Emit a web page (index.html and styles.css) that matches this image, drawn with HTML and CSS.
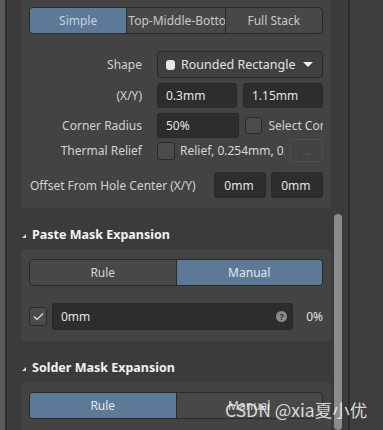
FILE: index.html
```html
<!DOCTYPE html>
<html lang="en">
<head>
  <meta charset="UTF-8">
  <meta name="viewport" content="width=device-width, initial-scale=1.0">
  <title>Pad Properties</title>
  <link rel="stylesheet" href="styles.css">
</head>
<body>
  <div class="frame">
    <div class="edge"></div>
    <div class="panel">
      <div class="content">

        <div class="section first">
          <div class="seg three">
            <div class="seg-item active">Simple</div>
            <div class="seg-item clip">Top-Middle-Bottom</div>
            <div class="seg-item">Full Stack</div>
          </div>

          <div class="row shape-row">
            <div class="label">Shape</div>
            <div class="dropdown">
              <span class="bullet"></span>
              <span class="dd-text">Rounded Rectangle</span>
              <span class="caret"></span>
            </div>
          </div>

          <div class="row xy-row">
            <div class="label">(X/Y)</div>
            <div class="input half">0.3mm</div>
            <div class="input half">1.15mm</div>
          </div>

          <div class="row corner-row">
            <div class="label">Corner Radius</div>
            <div class="input corner">50%</div>
            <div class="check"></div>
            <div class="clip-text">Select Corners</div>
          </div>

          <div class="row thermal-row">
            <div class="label">Thermal Relief</div>
            <div class="check"></div>
            <div class="relief">Relief, 0.254mm, 0.508mm</div>
            <div class="more">...</div>
          </div>

          <div class="row offset-row">
            <div class="offset-label">Offset From Hole Center (X/Y)</div>
            <div class="input small">0mm</div>
            <div class="input small">0mm</div>
          </div>
        </div>

        <div class="heading"><span class="tri"></span>Paste Mask Expansion</div>
        <div class="section">
          <div class="seg">
            <div class="seg-item">Rule</div>
            <div class="seg-item active">Manual</div>
          </div>
          <div class="row value-row">
            <div class="check checked">
              <svg width="11" height="9" viewBox="0 0 11 9"><path d="M1 4.5 L4 7.5 L10 1.5" fill="none" stroke="#d8d8d8" stroke-width="1.4"/></svg>
            </div>
            <div class="input wide">
              <span>0mm</span>
              <span class="help">?</span>
            </div>
            <div class="pct">0%</div>
          </div>
        </div>

        <div class="heading"><span class="tri"></span>Solder Mask Expansion</div>
        <div class="section last">
          <div class="seg">
            <div class="seg-item active">Rule</div>
            <div class="seg-item">Manual</div>
          </div>
        </div>

      </div>
      <div class="scroll"><div class="thumb"></div></div>
    </div>
    <div class="side"></div>
  </div>
  <div class="watermark">CSDN @xia夏小优</div>
</body>
</html>
```

FILE: styles.css
```css
body {
  margin: 0;
  padding: 0;
  width: 383px;
  height: 430px;
  overflow: hidden;
  background-color: #3c3c3c;
  font-family: "Noto Sans", "Open Sans", sans-serif;
  font-size: 12px;
  color: #d2d2d2;
}
.frame {
  display: flex;
  height: 430px;
}
.edge {
  width: 5px;
  background-color: #5d5b5a;
  border-right: 2px solid #2c2c2c;
}
.panel {
  width: 341px;
  display: flex;
  background-color: #3b3b3b;
  border-right: 2px solid #2d2d2d;
}
.side {
  flex: 1;
  background-color: #3d3d3d;
}
.content {
  width: 327px;
  padding-left: 14px;
  box-sizing: border-box;
}
.scroll {
  width: 8px;
  padding-top: 214px;
}
.thumb {
  height: 216px;
  background-color: #8b8b8b;
  border-radius: 4px;
}
.section {
  width: 310px;
  background-color: #434343;
  border-radius: 4px;
  padding: 10px 8px 10px 8px;
  box-sizing: border-box;
}
.section.first {
  padding-top: 7px;
  border-radius: 0 0 4px 4px;
}
.section.last {
  border-radius: 4px 4px 0 0;
  height: 60px;
}
.seg {
  display: flex;
  height: 27px;
  border: 1px solid #2a2a2a;
  border-radius: 4px;
  overflow: hidden;
  background-color: #484848;
  box-sizing: border-box;
}
.seg-item {
  flex: 1;
  display: flex;
  align-items: center;
  justify-content: center;
  color: #d6d6d6;
  white-space: nowrap;
  overflow: hidden;
}
.seg-item + .seg-item {
  border-left: 1px solid #2a2a2a;
}
.seg-item.active {
  background-color: #5c7a98;
  color: #e4e8ec;
}
.seg.three .seg-item {
  color: #c8c8c8;
}
.seg.three .seg-item.active {
  color: #c9d2dc;
}
.seg-item.clip {
  justify-content: flex-start;
  padding-left: 1px;
}
.row {
  display: flex;
  align-items: center;
}
.label {
  width: 113px;
  text-align: right;
  margin-right: 15px;
  flex-shrink: 0;
}
.shape-row {
  margin-top: 17px;
  height: 27px;
}
.xy-row {
  margin-top: 5px;
  height: 25px;
}
.corner-row {
  margin-top: 5px;
  height: 25px;
}
.thermal-row {
  margin-top: 1px;
  height: 23px;
}
.offset-row {
  margin-top: 10px;
  height: 26px;
}
.dropdown {
  width: 166px;
  height: 27px;
  box-sizing: border-box;
  border: 1px solid #2a2a2a;
  border-radius: 4px;
  background-color: #3f3f3f;
  display: flex;
  align-items: center;
  padding-left: 8px;
  color: #e2e2e2;
  font-size: 12.5px;
}
.bullet {
  width: 9px;
  height: 10px;
  border-radius: 3px;
  background-color: #e6e6e6;
  margin-right: 6px;
}
.dd-text {
  flex: 1;
}
.caret {
  width: 0;
  height: 0;
  border-left: 5px solid transparent;
  border-right: 5px solid transparent;
  border-top: 5px solid #eeeeee;
  margin-right: 9px;
}
.input {
  height: 25px;
  box-sizing: border-box;
  background-color: #2d2d2d;
  border: 1px solid #282828;
  border-radius: 3px;
  padding-left: 8px;
  display: flex;
  align-items: center;
  color: #e4e4e4;
}
.input.half {
  width: 80px;
}
.input.half + .input.half {
  margin-left: 6px;
}
.input.corner {
  width: 83px;
}
.input.small {
  width: 52px;
  height: 26px;
  padding-left: 9px;
}
.input.small + .input.small {
  margin-left: 5px;
}
.check {
  width: 17px;
  height: 17px;
  box-sizing: border-box;
  background-color: #4b4b4b;
  border: 1px solid #2a2a2a;
  border-radius: 3px;
  flex-shrink: 0;
  display: flex;
  align-items: center;
  justify-content: center;
}
.corner-row .check {
  margin-left: 6px;
}
.thermal-row .check {
  width: 18px;
  height: 18px;
}
.clip-text {
  margin-left: 6px;
  width: 55px;
  overflow: hidden;
  white-space: nowrap;
}
.relief {
  margin-left: 5px;
  width: 106px;
  margin-right: 4px;
  overflow: hidden;
  white-space: nowrap;
  color: #d6d6d6;
}
.more {
  width: 33px;
  height: 23px;
  box-sizing: border-box;
  border: 1px solid #4e4e4e;
  border-radius: 3px;
  color: #6a6a6a;
  font-size: 10px;
  display: flex;
  align-items: center;
  justify-content: center;
  margin-left: 1px;
}
.offset-label {
  width: 185px;
  padding-left: 1px;
}
.heading {
  height: 41px;
  box-sizing: border-box;
  padding-top: 12px;
  display: flex;
  align-items: center;
  font-weight: bold;
  color: #f2f2f2;
  font-size: 12.5px;
}
.tri {
  width: 0;
  height: 0;
  border-left: 4px solid transparent;
  border-bottom: 4px solid #d8d8d8;
  margin-left: 1px;
  margin-right: 6px;
  margin-top: 2px;
}
.value-row {
  margin-top: 17px;
  height: 27px;
  padding-bottom: 1px;
}
.value-row .check {
  width: 18px;
  height: 19px;
  margin-left: 0;
}
.input.wide {
  width: 242px;
  height: 27px;
  margin-left: 5px;
  justify-content: space-between;
  padding-right: 5px;
}
.help {
  width: 11px;
  height: 11px;
  border-radius: 50%;
  background-color: #8a8a8a;
  color: #2d2d2d;
  font-size: 9px;
  font-weight: bold;
  display: flex;
  align-items: center;
  justify-content: center;
}
.pct {
  margin-left: 13px;
  color: #e0e0e0;
}
.watermark {
  position: absolute;
  left: 225px;
  top: 397px;
  font-family: "Noto Sans CJK SC", sans-serif;
  font-size: 17.5px;
  color: rgba(255, 255, 255, 0.8);
  white-space: nowrap;
}
```
